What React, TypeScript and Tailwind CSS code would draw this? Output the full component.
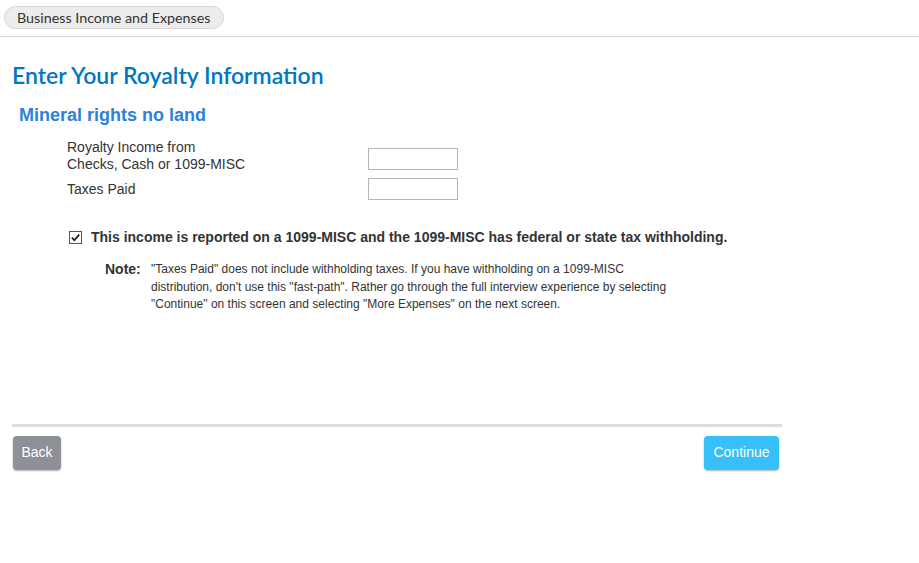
export default function App() {
  return (
    <div className="min-h-[563px] w-[919px] bg-white font-['Liberation_Sans',Arial,sans-serif] text-[#333]">
      <div className="flex h-[37px] items-start border-b border-[#d4d4d4] pl-[4px] pt-[6px]">
        <span className="flex h-[23px] items-center rounded-full border border-[#d6d6d6] bg-[#ececec] px-[12px] font-['Lato',sans-serif] text-[14.3px] text-[#333]">
          Business Income and Expenses
        </span>
      </div>

      <div className="w-[782px] pl-[12px]">
        <h1 className="mt-[25px] font-['Lato',sans-serif] text-[23px] font-semibold leading-[26px] text-[#0077c5]">
          Enter Your Royalty Information
        </h1>
        <h2 className="mt-[16px] pl-[7px] text-[18px] font-bold leading-[22px] text-[#2d7fd9]">Mineral rights no land</h2>

        <div className="mt-[13px] flex flex-col gap-[5px] pl-[55px] text-[14px]">
          <div className="flex items-start">
            <span className="w-[301px] leading-[17px]">
              Royalty Income from
              <br />
              Checks, Cash or 1099-MISC
            </span>
            <input className="mt-[9px] h-[22px] w-[90px] border border-[#b5b5b5] bg-white" />
          </div>
          <div className="flex items-center">
            <span className="w-[301px] leading-[17px]">Taxes Paid</span>
            <input className="h-[22px] w-[90px] border border-[#b5b5b5] bg-white" />
          </div>
        </div>

        <label className="mt-[27px] flex items-center gap-[9px] pl-[57px] text-[14px] font-bold">
          <span className="flex h-[13px] w-[13px] items-center justify-center border border-[#555] bg-white">
            <svg viewBox="0 0 12 12" className="h-[11px] w-[11px]">
              <path d="M2 6.2 L4.8 9 L10 2.8" fill="none" stroke="#222" strokeWidth="2" />
            </svg>
          </span>
          This income is reported on a 1099-MISC and the 1099-MISC has federal or state tax withholding.
        </label>

        <div className="mt-[13px] flex pl-[93px]">
          <span className="w-[46px] text-[14px] font-bold leading-[17px]">Note:</span>
          <p className="w-[530px] text-[12px] leading-[17.5px]">
            "Taxes Paid" does not include withholding taxes. If you have withholding on a 1099-MISC distribution, don't
            use this "fast-path". Rather go through the full interview experience by selecting "Continue" on this
            screen and selecting "More Expenses" on the next screen.
          </p>
        </div>

        <div className="mt-[110px] h-[3px] bg-[#dcdcdc]" />

        <div className="mt-[9px] flex justify-between pl-[1px] pr-[3px]">
          <button className="h-[34px] w-[48px] rounded-[4px] bg-[#8d9096] text-[14px] text-white shadow-[0_1px_2px_rgba(0,0,0,0.3)]">
            Back
          </button>
          <button className="h-[34px] w-[75px] rounded-[4px] bg-[#36bff8] text-[14px] text-white shadow-[0_1px_2px_rgba(0,0,0,0.3)]">
            Continue
          </button>
        </div>
      </div>
    </div>
  );
}
